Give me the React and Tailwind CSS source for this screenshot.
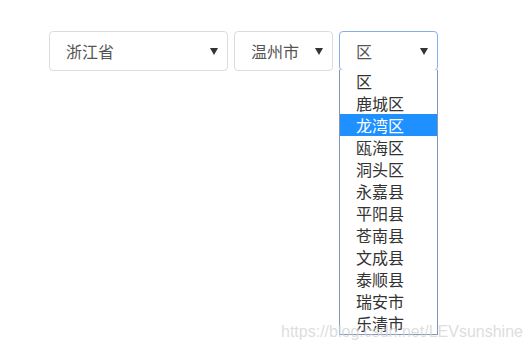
import React, { useState } from "react";

const districts = [
  "区",
  "鹿城区",
  "龙湾区",
  "瓯海区",
  "洞头区",
  "永嘉县",
  "平阳县",
  "苍南县",
  "文成县",
  "泰顺县",
  "瑞安市",
  "乐清市",
];

const Arrow = () => (
  <svg width="8" height="7" viewBox="0 0 8 7" className="shrink-0">
    <path d="M0 0 L8 0 L4 7 Z" fill="#333" />
  </svg>
);

const SelectBox = ({ label, width, focused }) => (
  <div
    className={`flex items-center justify-between h-[40px] pl-[16px] pr-[9px] rounded-[4px] border bg-white text-[16px] text-[#555] ${width} ${
      focused ? "border-[#8aaeea]" : "border-[#dcdcdc]"
    }`}
  >
    <span className="leading-none">{label}</span>
    <Arrow />
  </div>
);

export default function App() {
  const [active] = useState(2);

  return (
    <div
      className="relative w-[530px] h-[352px] bg-white overflow-hidden"
      style={{ fontFamily: '"Noto Sans CJK SC", "Noto Sans", sans-serif' }}
    >
      <div className="flex gap-[6px] pt-[31px] pl-[49px]">
        <SelectBox label="浙江省" width="w-[179px]" />
        <SelectBox label="温州市" width="w-[99px]" />
        <div className="relative">
          <SelectBox label="区" width="w-[99px]" focused />
          {/* open option list */}
          <div className="absolute left-0 top-[39px] w-[99px] bg-white border border-[#8497b8] border-t-0">
            {districts.map((d, i) => (
              <div
                key={d}
                className={`h-[22px] pl-[16px] flex items-center text-[16px] leading-none ${
                  i === active ? "bg-[#1e90ff] text-white" : "text-[#333]"
                }`}
              >
                {d}
              </div>
            ))}
          </div>
        </div>
      </div>

      <div
        className="absolute left-[281px] top-[324px] text-[16px] leading-none text-[#d4d4d4]/80"
        style={{ fontFamily: '"Liberation Sans", Arial, sans-serif' }}
      >
        https://blog.csdn.net/LEVsunshine
      </div>
    </div>
  );
}
